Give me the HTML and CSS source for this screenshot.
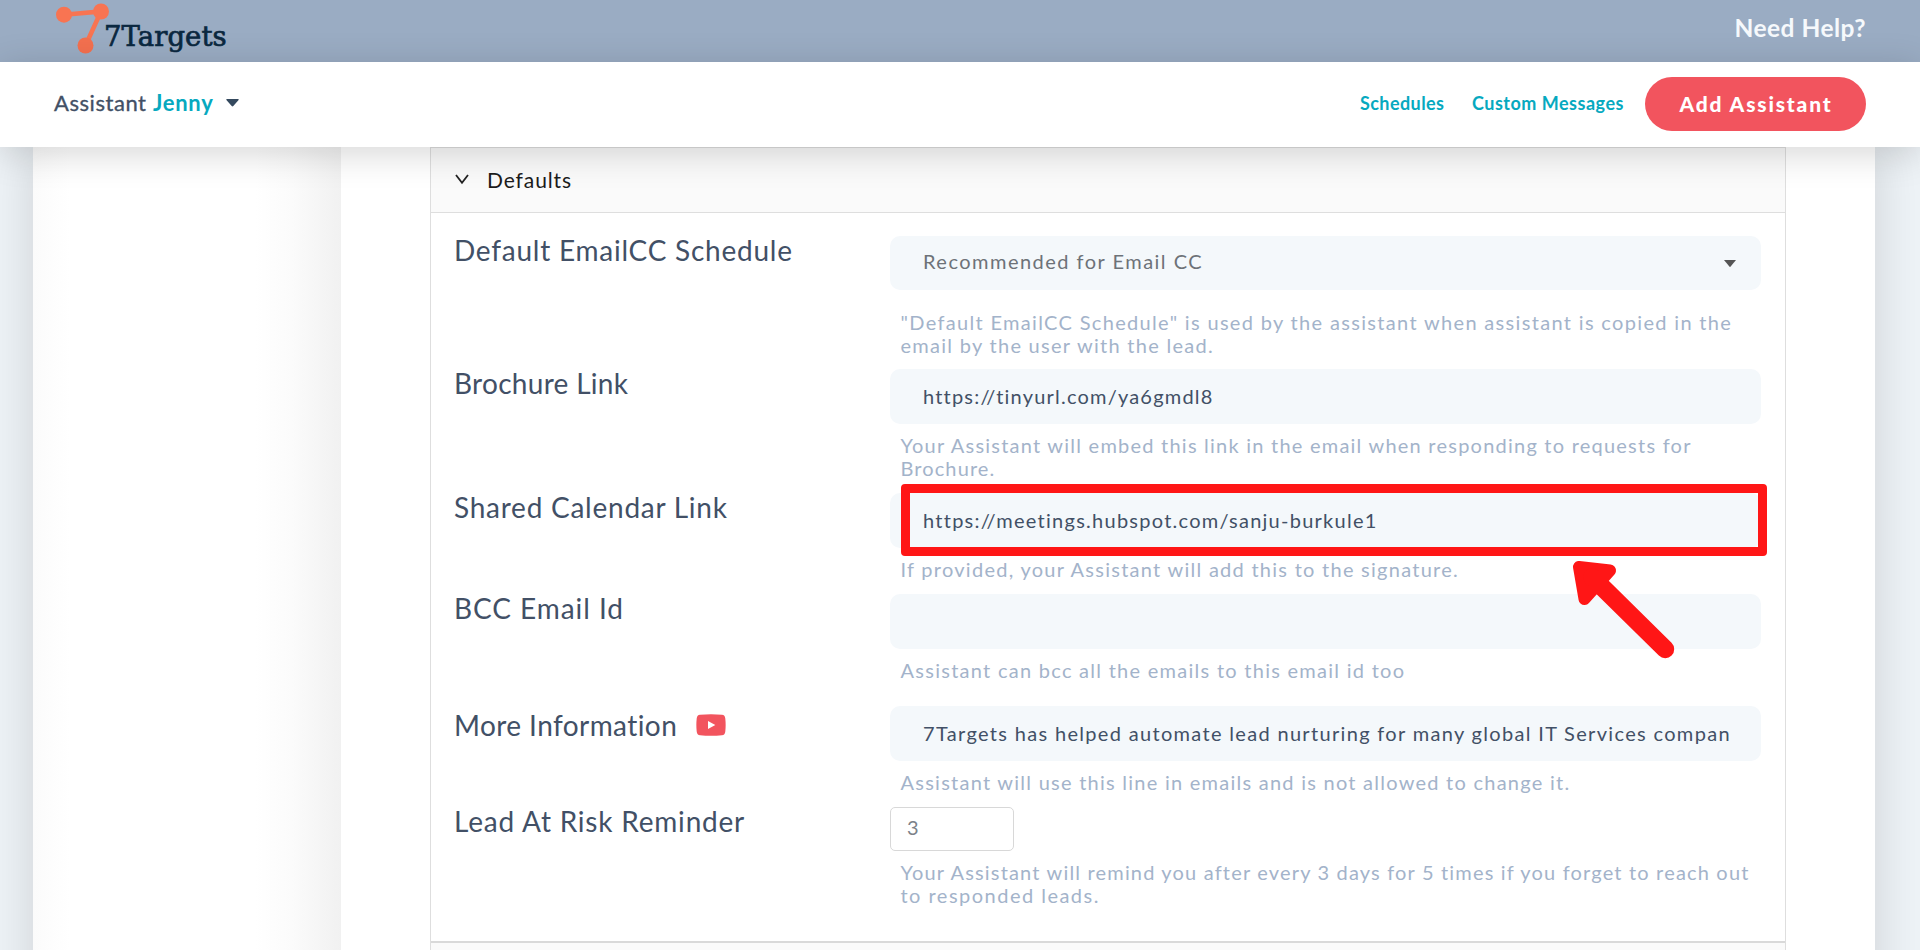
FILE: index.html
```html
<!DOCTYPE html>
<html lang="en">
<head>
<meta charset="utf-8">
<title>7Targets - Assistant Jenny</title>
<link rel="stylesheet" href="styles.css">
</head>
<body>
<header class="topbar">
  <div class="logo">
    <svg class="logo-mark" width="56" height="58" viewBox="0 0 56 58">
      <path d="M10 14.7 47 11.5 31.5 45.5" fill="none" stroke="#f87452" stroke-width="4.6"/>
      <circle cx="10" cy="14.7" r="8" fill="#f87452"/>
      <circle cx="47" cy="11.5" r="8" fill="#f87452"/>
      <circle cx="31.5" cy="45.5" r="8" fill="#f3704f"/>
    </svg>
    <span class="logo-text">7Targets</span>
  </div>
  <span class="help-link">Need Help?</span>
</header>
<nav class="subbar">
  <div class="assistant">
    <span class="assistant-label">Assistant</span>
    <span class="assistant-name">Jenny</span>
    <svg width="13" height="8" viewBox="0 0 13 8"><path d="M.6 0H12.4Q13 .6 12.4 1.2L7.3 7Q6.5 7.8 5.7 7L.6 1.2Q0 .6.6 0Z" fill="#34495e"/></svg>
  </div>
  <div class="actions">
    <span class="link schedules">Schedules</span>
    <span class="link messages">Custom Messages</span>
    <button class="add">Add Assistant</button>
  </div>
</nav>
<div class="page">
  <main class="container">
    <aside class="sidebar"></aside>
    <section class="content">
      <div class="panel">
        <div class="panel-head">
          <svg width="14" height="11" viewBox="0 0 14 11"><path d="M1 1 7 8.8 13 1" fill="none" stroke="#222" stroke-width="1.8"/></svg>
          <span>Defaults</span>
        </div>
        <div class="panel-body">
          <div class="row row-schedule">
            <div class="label t-schedule">Default EmailCC Schedule</div>
            <div class="control">
              <div class="field select"><span class="t-select">Recommended for Email CC</span>
                <svg width="12" height="8" viewBox="0 0 12 8"><path d="M0 0H12L6 7.3Z" fill="#555"/></svg>
              </div>
              <div class="hint far"><div class="h1">"Default EmailCC Schedule" is used by the assistant when assistant is copied in the</div><div class="h2">email by the user with the lead.</div></div>
            </div>
          </div>
          <div class="row row-brochure">
            <div class="label t-brochure">Brochure Link</div>
            <div class="control">
              <div class="field t-url">https://tinyurl.com/ya6gmdl8</div>
              <div class="hint"><div class="h3">Your Assistant will embed this link in the email when responding to requests for</div><div class="h4">Brochure.</div></div>
            </div>
          </div>
          <div class="row row-calendar">
            <div class="label t-calendar">Shared Calendar Link</div>
            <div class="control">
              <div class="field t-meet">https://meetings.hubspot.com/sanju-burkule1</div>
              <div class="hint h5">If provided, your Assistant will add this to the signature.</div>
              <div class="highlight"></div>
              <svg class="arrow" width="112" height="106" viewBox="1568 556 112 106">
                <path d="M1579 567 1610 570.5 1584.5 599Z" fill="#ff1616" stroke="#ff1616" stroke-width="12" stroke-linejoin="round"/>
                <path d="M1592 577 1665.2 649.2" fill="none" stroke="#ff1616" stroke-width="18" stroke-linecap="round"/>
              </svg>
            </div>
          </div>
          <div class="row row-bcc">
            <div class="label t-bcc">BCC Email Id</div>
            <div class="control">
              <div class="field"></div>
              <div class="hint h6">Assistant can bcc all the emails to this email id too</div>
            </div>
          </div>
          <div class="row row-more">
            <div class="label more"><span class="t-more">More Information</span>
              <svg width="30" height="22" viewBox="0 0 30 22"><path d="M4 .8Q15-.4 26 .8 29 1 29.3 4.500 30 11 29.3 17.500 29 21 26 21.200 15 22.400 4 21.200 1 21 .7 17.500 0 11 .7 4.500 1 1 4 .8Z" fill="#f2545e"/><path d="M12 7 19.300 11 12 15Z" fill="#fff"/></svg>
            </div>
            <div class="control">
              <div class="field t-info">7Targets has helped automate lead nurturing for many global IT Services compan</div>
              <div class="hint h7">Assistant will use this line in emails and is not allowed to change it.</div>
            </div>
          </div>
          <div class="row row-risk">
            <div class="label t-risk">Lead At Risk Reminder</div>
            <div class="control">
              <div class="number">3</div>
              <div class="hint"><div class="h8">Your Assistant will remind you after every 3 days for 5 times if you forget to reach out</div><div class="h9">to responded leads.</div></div>
            </div>
          </div>
        </div>
        <div class="panel-next"></div>
      </div>
    </section>
  </main>
</div>
</body>
</html>
```
FILE: styles.css
```css
* { box-sizing: border-box; }
body {
  margin: 0;
  height: 950px;
  overflow: hidden;
  display: flex;
  flex-direction: column;
  background: #eef3f7;
  font-family: "Lato", "Open Sans", sans-serif;
  color: #425066;
}
svg { flex: none; display: block; }

.topbar {
  flex: none;
  height: 62px;
  padding: 0 54px;
  display: flex;
  justify-content: space-between;
  background: #9aacc3;
}
.logo { display: flex; }
.logo-text {
  margin-left: -6px;
  padding-top: 19px;
  font: 27.5px/34px "DejaVu Serif", serif;
  letter-spacing: 0.05px;
  color: #0b2840;
  -webkit-text-stroke: 0.7px;
}
.help-link {
  padding-top: 12px;
  font-size: 24.500px;
  line-height: 32px;
  font-weight: 700;
  letter-spacing: 0.5px;
  color: #f6f9fc;
}

.subbar {
  flex: none;
  position: relative;
  z-index: 2;
  height: 85px;
  padding: 0 54px;
  display: flex;
  justify-content: space-between;
  align-items: center;
  background: #fff;
  box-shadow: 0 6px 36px rgba(0, 0, 0, .17);
}
.assistant { display: flex; align-items: center; font-size: 22px; line-height: 30px; padding-bottom: 3px; }
.assistant-label { width: 99px; letter-spacing: 0.55px; -webkit-text-stroke: 0.35px; }
.assistant-name { width: 73px; font-weight: 700; letter-spacing: 0.7px; color: #06a9bf; }
.actions { display: flex; align-items: center; padding-bottom: 1px; }
.link { font-size: 18px; font-weight: 700; color: #06a9bf; padding-bottom: 2px; }
.schedules { width: 112px; letter-spacing: 0.42px; }
.messages { width: 173px; letter-spacing: 0.5px; }
.add {
  width: 221px;
  height: 54px;
  border: 0;
  border-radius: 27px;
  padding: 0 0 1px 1px;
  background: #f2545e;
  color: #fff;
  font: 900 21px/28px "Lato", sans-serif;
  letter-spacing: 1.84px;
}

.page { flex: 1; min-height: 0; padding: 0 45px 0 33px; }
.container {
  height: 900px;
  display: flex;
  background: #fff;
  box-shadow: 0 0 48px rgba(0, 0, 0, .14);
}
.sidebar {
  width: 308px;
  background: linear-gradient(90deg, #fbfbfb, #fff 12%, #fff 72%, #fbfbfb 84%, #f1f1f1);
}
.content { flex: 1; padding-left: 89px; }
.panel {
  width: 1356px;
  height: 803px;
  border: solid #dedede;
  border-width: 1px 1px 0;
}
.panel-head {
  height: 65px;
  padding: 0 0 2px 24px;
  display: flex;
  align-items: center;
  background: #fafafa;
  border-bottom: 1px solid #dedede;
  font-size: 21px;
  letter-spacing: 0.9px;
  color: #1c1c1c;
}
.panel-head span { margin-left: 18px; }
.panel-body { padding: 23px 0 0 23px; height: 728px; }
.panel-next { height: 10px; border-top: 2px solid #d9d9d9; background: #fafafa; }

.row { display: grid; grid-template-columns: 436px 871px; }
.row-schedule { height: 133px; }
.row-brochure { height: 124px; }
.row-calendar { height: 101px; }
.row-bcc { height: 112px; }
.row-more { height: 101px; }
.row-risk { height: 135px; }

.label { margin-top: -3px; font-size: 28px; line-height: 34px; }
.more { display: flex; align-items: center; gap: 19px; height: 34px; margin-top: 2px; }
.control { position: relative; }
.field {
  height: 55px;
  padding: 0 33px;
  border-radius: 10px;
  background: #f4f8fb;
  font-size: 20px;
  line-height: 54px;
  white-space: nowrap;
  overflow: hidden;
}
.select {
  height: 54px;
  display: flex;
  justify-content: space-between;
  align-items: center;
  padding: 0 25px 2px 33px;
  line-height: 50px;
  color: #6d7278;
}
.select span { padding-bottom: 2px; }
.select svg { margin-top: 3px; }
.number {
  width: 124px;
  height: 44px;
  padding-left: 16px;
  border: 1px solid #d8d8d8;
  border-radius: 5px;
  font-size: 20px;
  line-height: 39px;
  color: #7c8289;
}
.hint {
  padding: 9.600px 0 0 10.500px;
  font-size: 20px;
  line-height: 23.400px;
  color: #a3b3ca;
  white-space: nowrap;
}
.far { padding-top: 20.600px; }

.highlight {
  position: absolute;
  left: 11px;
  top: -9px;
  width: 866px;
  height: 72px;
  border: 9px solid #ff1616;
  border-radius: 4px;
}
.arrow { position: absolute; z-index: 1; left: 678px; top: 63px; }

.t-schedule { letter-spacing: .767px; }
.t-brochure { letter-spacing: .3px; }
.t-calendar { letter-spacing: .75px; }
.t-bcc { letter-spacing: .945px; }
.t-more { letter-spacing: .42px; }
.t-risk { letter-spacing: .8px; }
.t-select { letter-spacing: 1.478px; }
.t-url { letter-spacing: 1.2px; }
.t-meet { letter-spacing: 1.257px; }
.t-info { letter-spacing: 1.325px; }
.h1 { letter-spacing: 1.33px; }
.h2 { letter-spacing: 1.28px; }
.h3 { letter-spacing: 1.23px; }
.h4 { letter-spacing: 1.1px; }
.h5 { letter-spacing: 1.265px; }
.h6 { letter-spacing: 1.269px; }
.h7 { letter-spacing: 1.25px; }
.h8 { letter-spacing: 1.175px; }
.h9 { letter-spacing: 1.48px; }
```
